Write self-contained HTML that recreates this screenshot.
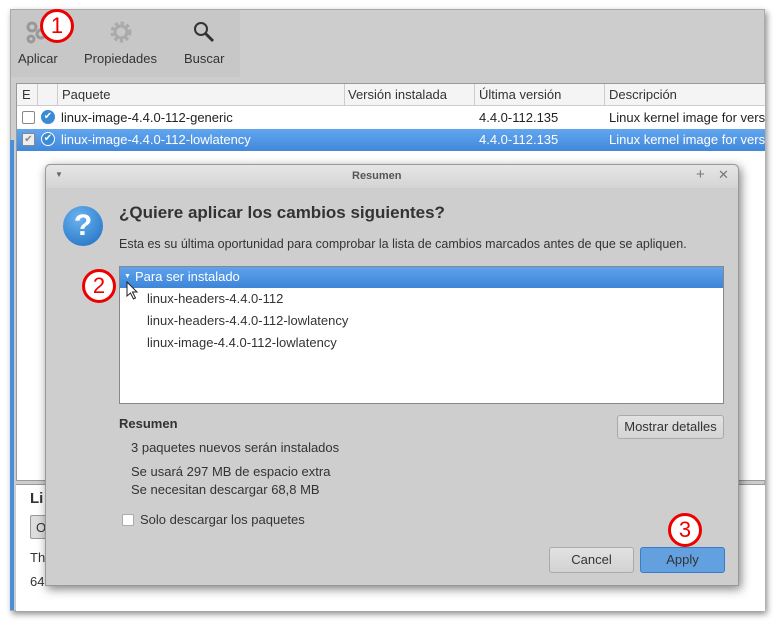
<!DOCTYPE html><html><head><style>
*{box-sizing:border-box;margin:0;padding:0}
body{width:780px;height:625px;background:#fff;font-family:"Liberation Sans","DejaVu Sans",sans-serif;font-size:13px;color:#333;position:relative;overflow:hidden}
.a{position:absolute}
.circ{position:absolute;width:34px;height:34px;border:3px solid #e00;border-radius:50%;background:#fff;color:#e00;font-size:22px;text-align:center;line-height:28px}
</style></head><body>
<div class="a" style="left:10px;top:9px;width:755px;height:602px;background:#cdcdcd;border:1px solid #aaa;box-shadow:2px 3px 6px rgba(0,0,0,.45)"></div>
<div class="a" style="left:11px;top:10px;width:229px;height:67px;background:#c7c7c7"></div>
<svg class="a" style="left:24px;top:20px" width="26" height="26" viewBox="0 0 26 26"><g fill="none" stroke="#999" stroke-width="3"><circle cx="8" cy="7" r="4"/><circle cx="17" cy="14" r="4"/><circle cx="7" cy="19" r="3"/></g></svg>
<div class="a" style="left:18px;top:51px">Aplicar</div>
<svg class="a" style="left:109px;top:20px" width="24" height="24" viewBox="0 0 24 24"><circle cx="12" cy="12" r="8" fill="none" stroke="#aaa" stroke-width="5" stroke-dasharray="3 2.3"/><circle cx="12" cy="12" r="6" fill="none" stroke="#aaa" stroke-width="3"/></svg>
<div class="a" style="left:84px;top:51px">Propiedades</div>
<svg class="a" style="left:192px;top:20px" width="24" height="24" viewBox="0 0 24 24"><circle cx="9" cy="9" r="6" fill="none" stroke="#333" stroke-width="2"/><path d="M13.5 13.5L21 21" stroke="#333" stroke-width="3"/></svg>
<div class="a" style="left:184px;top:51px">Buscar</div>
<div class="circ" style="left:40px;top:9px">1</div>
<div class="a" style="left:10px;top:140px;width:4px;height:470px;background:#4a90d9"></div>
<div class="a" style="left:16px;top:83px;width:749px;height:398px;background:#fff;border:1px solid #999;border-right:none"></div>
<div class="a" style="left:17px;top:84px;width:748px;height:22px;background:#f4f4f4;border-bottom:1px solid #ccc"></div>
<div class="a" style="left:22px;top:87px">E</div>
<div class="a" style="left:37px;top:84px;height:22px;border-left:1px solid #ccc"></div>
<div class="a" style="left:57px;top:84px;height:22px;border-left:1px solid #ccc"></div>
<div class="a" style="left:62px;top:87px">Paquete</div>
<div class="a" style="left:344px;top:84px;height:22px;border-left:1px solid #ccc"></div>
<div class="a" style="left:348px;top:87px">Versión instalada</div>
<div class="a" style="left:474px;top:84px;height:22px;border-left:1px solid #ccc"></div>
<div class="a" style="left:479px;top:87px">Última versión</div>
<div class="a" style="left:604px;top:84px;height:22px;border-left:1px solid #ccc"></div>
<div class="a" style="left:609px;top:87px">Descripción</div>
<div class="a" style="left:22px;top:111px;width:13px;height:13px;border:1px solid #888;background:#fff;border-radius:2px"></div>
<div class="a" style="left:41px;top:110px;width:14px;height:14px;border-radius:50%;background:#3a8ad6;color:#fff;font-size:10px;text-align:center;line-height:14px">✔</div>
<div class="a" style="left:61px;top:110px;color:#222">linux-image-4.4.0-112-generic</div>
<div class="a" style="left:479px;top:110px;color:#222">4.4.0-112.135</div>
<div class="a" style="left:609px;top:110px;color:#222;white-space:nowrap;width:156px;overflow:hidden">Linux kernel image for version</div>
<div class="a" style="left:17px;top:129px;width:748px;height:22px;background:linear-gradient(#62a6ef,#4188dc)"></div>
<div class="a" style="left:22px;top:133px;width:13px;height:13px;border:1px solid #888;background:#eee;color:#888;font-size:10px;line-height:11px;text-align:center">✔</div>
<div class="a" style="left:41px;top:132px;width:14px;height:14px;border-radius:50%;background:#3a8ad6;border:1px solid #fff;color:#fff;font-size:10px;text-align:center;line-height:12px">✔</div>
<div class="a" style="left:61px;top:132px;color:#fff">linux-image-4.4.0-112-lowlatency</div>
<div class="a" style="left:479px;top:132px;color:#fff">4.4.0-112.135</div>
<div class="a" style="left:609px;top:132px;color:#fff;white-space:nowrap;width:156px;overflow:hidden">Linux kernel image for version</div>
<div class="a" style="left:16px;top:484px;width:749px;height:127px;background:#fff;border-top:1px solid #999"></div>
<div class="a" style="left:30px;top:490px;font-weight:bold;font-size:15px">Li</div>
<div class="a" style="left:30px;top:515px;width:30px;height:24px;border:1px solid #999;background:#ddd;border-radius:2px;padding:4px 5px">O</div>
<div class="a" style="left:30px;top:550px">Th</div>
<div class="a" style="left:30px;top:574px">64</div>
<!-- dialog -->
<div class="a" style="left:45px;top:164px;width:694px;height:422px;background:#cecece;border:1px solid #999;border-radius:5px 5px 0 0;box-shadow:2px 3px 10px rgba(0,0,0,.5)"></div>
<div class="a" style="left:46px;top:165px;width:692px;height:23px;background:linear-gradient(#e6e6e6,#d4d4d4);border-radius:5px 5px 0 0"></div>
<div class="a" style="left:55px;top:170px;font-size:8px;color:#666">▼</div>
<div class="a" style="left:352px;top:170px;font-size:11px;font-weight:bold;color:#555">Resumen</div>
<div class="a" style="left:696px;top:166px;font-size:15px;color:#777">+</div>
<div class="a" style="left:718px;top:167px;font-size:13px;color:#777">✕</div>
<div class="a" style="left:63px;top:206px;width:40px;height:40px;border-radius:50%;background:radial-gradient(circle at 40% 30%,#6bb4f0,#1b6cc0);color:#fff;font-size:30px;font-weight:bold;text-align:center;line-height:40px">?</div>
<div class="a" style="left:119px;top:203px;font-size:17px;font-weight:bold;color:#333">¿Quiere aplicar los cambios siguientes?</div>
<div class="a" style="left:119px;top:237px;font-size:12.5px;color:#333">Esta es su última oportunidad para comprobar la lista de cambios marcados antes de que se apliquen.</div>
<div class="a" style="left:119px;top:266px;width:605px;height:138px;background:#fff;border:1px solid #888"></div>
<div class="a" style="left:120px;top:267px;width:603px;height:21px;background:linear-gradient(#5fa3ee,#3d85d8);color:#fff;padding:2px 0 0 15px">Para ser instalado</div>
<div class="a" style="left:124px;top:273px;font-size:7px;color:#fff">▼</div>
<svg class="a" style="left:126px;top:281px" width="14" height="20" viewBox="0 0 14 20"><path d="M1 1L1 15L4.5 12L7.5 18L9.5 17L6.5 11L11 11Z" fill="#fff" stroke="#222" stroke-width="1"/></svg>
<div class="a" style="left:147px;top:291px">linux-headers-4.4.0-112</div>
<div class="a" style="left:147px;top:313px">linux-headers-4.4.0-112-lowlatency</div>
<div class="a" style="left:147px;top:335px">linux-image-4.4.0-112-lowlatency</div>
<div class="circ" style="left:82px;top:269px">2</div>
<div class="a" style="left:119px;top:416px;font-weight:bold">Resumen</div>
<div class="a" style="left:617px;top:415px;width:107px;height:24px;border:1px solid #aaa;background:linear-gradient(#e2e2e2,#d4d4d4);border-radius:3px;text-align:center;line-height:22px">Mostrar detalles</div>
<div class="a" style="left:131px;top:440px">3 paquetes nuevos serán instalados</div>
<div class="a" style="left:131px;top:464px">Se usará 297 MB de espacio extra</div>
<div class="a" style="left:131px;top:482px">Se necesitan descargar 68,8 MB</div>
<div class="a" style="left:122px;top:514px;width:12px;height:12px;background:#fff;border:1px solid #aaa;border-radius:2px"></div>
<div class="a" style="left:140px;top:512px">Solo descargar los paquetes</div>
<div class="a" style="left:549px;top:547px;width:85px;height:26px;border:1px solid #aaa;background:linear-gradient(#e2e2e2,#d2d2d2);border-radius:3px;text-align:center;line-height:24px">Cancel</div>
<div class="a" style="left:640px;top:547px;width:85px;height:26px;border:1px solid #3a7bc8;background:#62a0e0;border-radius:3px;text-align:center;line-height:24px">Apply</div>
<div class="circ" style="left:668px;top:513px">3</div>
</body></html>
